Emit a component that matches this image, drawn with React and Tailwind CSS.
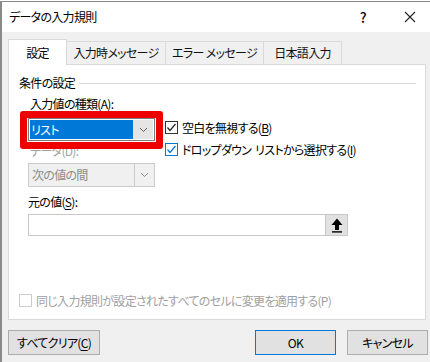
const font = { fontFamily: '"Noto Sans CJK JP", "Noto Sans", sans-serif' };

function Chevron({ color = "#606060" }) {
  return (
    <svg width="9" height="6" viewBox="0 0 9 6" fill="none">
      <polyline points="1,1 4.5,4.5 8,1" stroke={color} strokeWidth="1" />
    </svg>
  );
}

function Check({ color }) {
  return (
    <svg width="11" height="11" viewBox="0 0 11 11" fill="none">
      <polyline points="1.5,5.5 4,8.5 9.5,2" stroke={color} strokeWidth="1.2" />
    </svg>
  );
}

function Checkbox({ border, check, children, disabled }) {
  return (
    <div className="flex items-center gap-[4px] h-[13px]">
      <div
        className="w-[13px] h-[13px] border bg-white flex items-center justify-center shrink-0"
        style={{ borderColor: border }}
      >
        {check && <Check color={check} />}
      </div>
      <span className={disabled ? "text-[#a0a0a0] leading-none" : "text-black leading-none"}>{children}</span>
    </div>
  );
}

function U({ children }) {
  return <span className="underline underline-offset-2">{children}</span>;
}

export default function App() {
  return (
    <div
      className="w-[430px] h-[362px] bg-white pt-px overflow-hidden text-[12px] tracking-[-0.7px] [font-feature-settings:'palt']"
      style={font}
    >
      <div className="h-[361px] border-l-2 border-t border-[#8a8a8a] bg-[#f0f0f0] flex flex-col">
        {/* title bar */}
        <div className="h-[30px] bg-white flex items-center pl-[7px] pr-[14px] shrink-0">
          <span className="text-[12px]">データの入力規則</span>
          <span className="ml-auto mr-[38px] text-[14px] font-medium">?</span>
          <svg width="12" height="12" viewBox="0 0 12 12">
            <path d="M1 1 L11 11 M11 1 L1 11" stroke="#222" strokeWidth="1.1" />
          </svg>
        </div>

        {/* tabs */}
        <div className="flex items-end pl-[6px] pt-[7px] shrink-0">
          <div className="h-[26px] w-[59px] bg-white border border-b-0 border-[#d9d9d9] flex items-center justify-center relative z-10 -mb-px">
            設定
          </div>
          {["入力時メッセージ", "エラー メッセージ", "日本語入力"].map((t, i) => (
            <div
              key={t}
              className={
                "h-[23px] border border-b-0 border-l-0 border-[#d9d9d9] flex items-center justify-center text-[#111] " +
                (i === 0 ? "w-[99px]" : i === 1 ? "w-[98px]" : "w-[78px]")
              }
            >
              {t}
            </div>
          ))}
        </div>

        {/* panel */}
        <div className="ml-[6px] w-[418px] h-[256px] bg-white border border-[#d9d9d9] shrink-0 flex flex-col">
          <div className="flex items-center mt-[11px] pl-[10px] h-[14px]">
            <span className="leading-none">条件の設定</span>
            <div className="flex-1 h-px bg-[#dcdcdc] ml-[4px] mr-[9px]" />
          </div>

          <div className="pl-[21px] mt-[7px] h-[14px] leading-[14px]">
            入力値の種類(<U>A</U>):
          </div>

          <div className="flex pl-[19px] mt-[7px]">
            <div className="w-[127px] flex flex-col">
              <div className="relative h-[23px] border border-[#7a7a7a] bg-white flex p-px">
                <div className="flex-1 bg-[#0078d7] text-white flex items-center pl-[1px] leading-none">リスト</div>
                <div className="w-[20px] bg-[#e5e5e5] flex items-center justify-center">
                  <Chevron />
                </div>
                <div className="absolute -left-[9px] -top-[8px] -right-[9px] -bottom-[9px] border-[7px] border-[#ee0000] rounded-[3px]" />
              </div>
              <div className="mt-[3px] h-[14px] leading-[14px] pl-[2px] text-[#a0a0a0]">データ(D):</div>
              <div className="mt-[5px] h-[24px] border border-[#cccccc] bg-[#f0f0f0] flex">
                <div className="flex-1 flex items-center pl-[3px] text-[#8c8c8c] leading-none">次の値の間</div>
                <div className="w-[20px] border-l border-[#cccccc] flex items-center justify-center">
                  <Chevron color="#8a8a8a" />
                </div>
              </div>
            </div>
            <div className="ml-[10px] mt-[3px] flex flex-col gap-[9px]">
              <Checkbox border="#333333" check="#222222">
                空白を無視する(<U>B</U>)
              </Checkbox>
              <Checkbox border="#0078d7" check="#0078d7">
                ドロップダウン<span className="inline-block w-[4px]" />リストから選択する(<U>I</U>)
              </Checkbox>
            </div>
          </div>

          <div className="pl-[19px] mt-[8px] h-[14px] leading-[14px]">
            元の値(<U>S</U>):
          </div>
          <div className="ml-[19px] mt-[5px] w-[320px] h-[22px] border border-[#c8c8c8] bg-white flex justify-end">
            <div className="w-[22px] h-full bg-[#e1e1e1] border-l border-[#c8c8c8] flex items-center justify-center">
              <svg width="12" height="15" viewBox="0 0 12 15" className="shrink-0 w-[12px] h-[15px]">
                <polygon points="6,0.5 11.5,7 8,7 8,12 4,12 4,7 0.5,7" fill="#000" />
                <rect x="1" y="13.2" width="10" height="1.4" fill="#000" />
              </svg>
            </div>
          </div>

          <div className="pl-[10px] mt-[58px]">
            <Checkbox border="#cccccc" disabled>
              同じ入力規則が設定されたすべてのセルに変更を適用する(P)
            </Checkbox>
          </div>
        </div>

        {/* buttons */}
        <div className="flex items-center pl-[6px] pr-[2px] mt-[10px]">
          <button className="w-[92px] h-[25px] bg-[#e1e1e1] border border-[#adadad] leading-none">
            すべてクリア(<U>C</U>)
          </button>
          <button className="ml-auto w-[81px] h-[25px] bg-[#e1e1e1] border border-[#0078d7] leading-none">
            OK
          </button>
          <button className="ml-[11px] w-[81px] h-[25px] bg-[#e1e1e1] border border-[#adadad] leading-none">
            キャンセル
          </button>
        </div>
      </div>
    </div>
  );
}
